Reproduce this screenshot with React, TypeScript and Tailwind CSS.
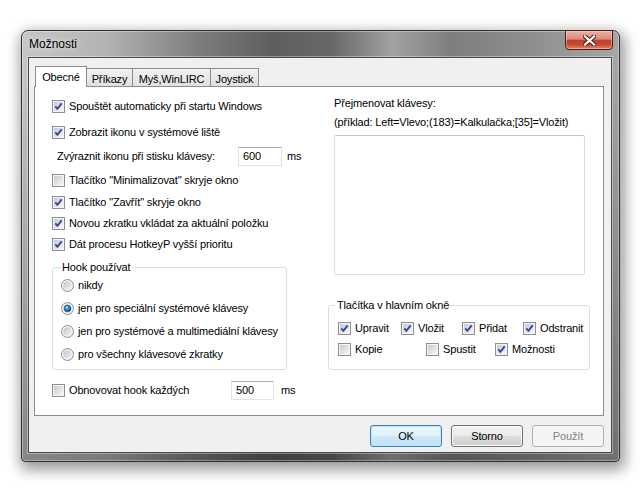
import React from "react";

function Check({ checked }: { checked?: boolean }) {
  return (
    <svg width="13" height="13" viewBox="0 0 13 13" className="block shrink-0">
      <defs>
        <linearGradient id="cbFill" x1="0" y1="0" x2="1" y2="1">
          <stop offset="0" stopColor="#c6cbd3" />
          <stop offset="1" stopColor="#f6f7f8" />
        </linearGradient>
      </defs>
      <rect x="0.5" y="0.5" width="12" height="12" fill="#f4f4f4" stroke="#8e8f8f" />
      <rect x="2" y="2" width="9" height="9" fill="url(#cbFill)" />
      {checked && (
        <path d="M3.3 6.3 L5.4 8.8 L9.7 3.3" fill="none" stroke="#34489a" strokeWidth="1.9" />
      )}
    </svg>
  );
}

function Radio({ on }: { on?: boolean }) {
  return (
    <svg width="13" height="13" viewBox="0 0 13 13" className="block shrink-0">
      <defs>
        <linearGradient id="rdFill" x1="0" y1="0" x2="1" y2="1">
          <stop offset="0" stopColor="#bfc3ca" />
          <stop offset="1" stopColor="#f6f6f6" />
        </linearGradient>
        <radialGradient id="rdOn" cx="0.4" cy="0.35" r="0.7">
          <stop offset="0" stopColor="#b0e8ff" />
          <stop offset="0.45" stopColor="#2a8ad4" />
          <stop offset="1" stopColor="#0b3f7a" />
        </radialGradient>
      </defs>
      <circle cx="6.5" cy="6.5" r="6" fill="#f2f2f2" stroke="#8e8f8f" />
      <circle cx="6.5" cy="6.5" r="4.3" fill="url(#rdFill)" />
      {on && <circle cx="6.5" cy="6.5" r="3.3" fill="url(#rdOn)" stroke="#18466f" strokeWidth="0.7" />}
    </svg>
  );
}

function CRow({ checked, children, className = "" }: { checked?: boolean; children: React.ReactNode; className?: string }) {
  return (
    <div className={"flex h-[20px] items-center " + className}>
      <Check checked={checked} />
      <span className="ml-[4px] whitespace-nowrap">{children}</span>
    </div>
  );
}

function RRow({ on, children, className = "" }: { on?: boolean; children: React.ReactNode; className?: string }) {
  return (
    <div className={"flex h-[20px] items-center " + className}>
      <Radio on={on} />
      <span className="ml-[4px] whitespace-nowrap">{children}</span>
    </div>
  );
}

function Edit({ value, w }: { value: string; w: string }) {
  return (
    <div
      className={
        "flex h-[19px] items-center border border-[#e2e3ea] border-t-[#abadb3] bg-white pl-[4px] " + w
      }
    >
      {value}
    </div>
  );
}

function CloseX() {
  return (
    <svg width="13" height="11" viewBox="0 0 13 11" className="block">
      <path d="M2 1.5 L11 9.5 M11 1.5 L2 9.5" stroke="#4a1a12" strokeWidth="4.2" strokeLinecap="square" fill="none" />
      <path d="M2 1.5 L11 9.5 M11 1.5 L2 9.5" stroke="#ffffff" strokeWidth="2.3" strokeLinecap="square" fill="none" />
    </svg>
  );
}

export default function App() {
  return (
    <div className="h-[491px] w-[642px] overflow-hidden bg-white pl-[21px] pt-[30px] font-['Liberation_Sans',Arial,sans-serif] text-[11px] leading-[14px] tracking-[-0.15px] text-black">
      <div className="flex h-[432px] w-[599px] flex-col rounded-t-[7px] rounded-b-[4px] border border-[#2e2e2e] bg-[linear-gradient(to_bottom,rgba(0,0,0,0)_0%,rgba(0,0,0,0)_8%,rgba(0,0,0,0.32)_100%),linear-gradient(to_right,#c6c6c6_0%,#b3b3b3_14%,#7c7c7c_30%,#5e5e5e_42%,#686868_52%,#a2a2a2_62%,#7e7e7e_72%,#8e8e8e_85%,#a6a6a6_100%)] shadow-[inset_0_0_0_1px_rgba(255,255,255,0.35),2px_5px_14px_3px_rgba(0,0,0,0.4)]">
        {/* title bar */}
        <div className="flex h-[26px] shrink-0 items-start justify-between">
          <div className="flex h-[26px] items-center pl-[7px] text-[12px] tracking-normal [text-shadow:0_0_6px_rgba(255,255,255,0.9)]">
            Možnosti
          </div>
          <div className="-mt-px mr-[6px] flex h-[20px] w-[48px] items-center justify-center rounded-b-[4px] border border-[#4e1a12] bg-[linear-gradient(to_bottom,#eab0a3_0%,#da8a7a_45%,#c1422c_52%,#c44a32_75%,#e08a66_100%)] shadow-[inset_0_0_0_1px_rgba(255,220,210,0.45)]">
            <CloseX />
          </div>
        </div>

        {/* client area */}
        <div className="ml-[6px] flex h-[396px] w-[584px] shrink-0 flex-col border border-[#4a4a4a] bg-[#f0f0f0] pl-[5px] pr-[7px] pt-[8px] shadow-[0_0_0_1px_rgba(255,255,255,0.35)]">
          {/* tabs */}
          <div className="relative z-10 -mb-px flex h-[21px] items-end pl-px">
            <div className="flex h-[21px] w-[52px] items-center justify-center border border-b-0 border-[#898c95] bg-white">
              Obecné
            </div>
            <div className="mb-px flex h-[18px] w-[46px] items-center justify-center border border-b-0 border-l-0 border-[#898c95] bg-[linear-gradient(to_bottom,#f2f2f2,#e0e0e0)] pt-[2px]">
              Příkazy
            </div>
            <div className="mb-px flex h-[18px] w-[78px] items-center justify-center border border-b-0 border-l-0 border-[#898c95] bg-[linear-gradient(to_bottom,#f2f2f2,#e0e0e0)] pt-[2px]">
              Myš,WinLIRC
            </div>
            <div className="mb-px flex h-[18px] w-[48px] items-center justify-center border border-b-0 border-l-0 border-[#898c95] bg-[linear-gradient(to_bottom,#f2f2f2,#e0e0e0)] pt-[2px]">
              Joystick
            </div>
          </div>

          {/* panel */}
          <div className="flex h-[330px] w-[570px] shrink-0 items-start border border-[#898c95] bg-white pl-[17px] pt-[9px]">
            {/* left column */}
            <div className="flex w-[276px] flex-col">
              <CRow checked>Spouštět automaticky při startu Windows</CRow>
              <CRow checked className="mt-[6px]">Zobrazit ikonu v systémové liště</CRow>
              <div className="mt-[4px] flex h-[20px] items-center pl-[5px]">
                <span className="w-[181px] whitespace-nowrap">Zvýraznit ikonu při stisku klávesy:</span>
                <Edit value="600" w="w-[44px]" />
                <span className="ml-[5px]">ms</span>
              </div>
              <CRow className="mt-[4px]">Tlačítko "Minimalizovat" skryje okno</CRow>
              <CRow checked className="mt-[2px]">Tlačítko "Zavřít" skryje okno</CRow>
              <CRow checked className="mt-[1px]">Novou zkratku vkládat za aktuální položku</CRow>
              <CRow checked className="mt-[1px]">Dát procesu HotkeyP vyšší prioritu</CRow>

              <fieldset className="mt-[6px] w-[234px] rounded-[3px] border border-[#d5dfe5] px-[8px] pb-[5px]">
                <legend className="px-[1px] leading-[14px]">Hook používat</legend>
                <RRow className="mt-[1px]">nikdy</RRow>
                <RRow on className="mt-[3px]">jen pro speciální systémové klávesy</RRow>
                <RRow className="mt-[3px]">jen pro systémové a multimediální klávesy</RRow>
                <RRow className="mt-[3px]">pro všechny klávesové zkratky</RRow>
              </fieldset>

              <div className="mt-[10px] flex h-[20px] items-center">
                <Check />
                <span className="ml-[4px] w-[162px] whitespace-nowrap">Obnovovat hook každých</span>
                <Edit value="500" w="w-[43px]" />
                <span className="ml-[7px]">ms</span>
              </div>
            </div>

            {/* right column */}
            <div className="flex w-[260px] flex-col">
              <div className="ml-[6px] h-[14px] whitespace-nowrap">Přejmenovat klávesy:</div>
              <div className="ml-[6px] mt-[5px] h-[14px] whitespace-nowrap">
                (příklad: Left=Vlevo;(183)=Kalkulačka;[35]=Vložit)
              </div>
              <div className="ml-[6px] mt-[6px] h-[140px] w-[251px] rounded-[2px] border border-[#d9dce2] border-t-[#c3c6cc] bg-white" />

              <fieldset className="mt-[23px] w-[260px] rounded-[3px] border border-[#d5dfe5] px-[6px] pb-[10px]">
                <legend className="px-[2px] leading-[14px]">Tlačítka v hlavním okně</legend>
                <div className="ml-[3px] mt-[6px] flex h-[20px] items-center">
                  <CRow checked className="w-[63px]">Upravit</CRow>
                  <CRow checked className="w-[61px]">Vložit</CRow>
                  <CRow checked className="w-[61px]">Přidat</CRow>
                  <CRow checked>Odstranit</CRow>
                </div>
                <div className="ml-[3px] mt-[1px] flex h-[20px] items-center">
                  <CRow className="w-[88px]">Kopie</CRow>
                  <CRow className="w-[69px]">Spustit</CRow>
                  <CRow checked>Možnosti</CRow>
                </div>
              </fieldset>
            </div>
          </div>

          {/* buttons */}
          <div className="mt-[9px] flex justify-end gap-[9px]">
            <div className="flex h-[22px] w-[72px] items-center justify-center rounded-[3px] border border-[#3c7fb1] bg-[linear-gradient(to_bottom,#eef7fc_0%,#e0f0fa_50%,#cde8f7_51%,#bfe1f5_100%)] shadow-[inset_0_0_0_1px_#bfe6fb]">
              OK
            </div>
            <div className="flex h-[22px] w-[72px] items-center justify-center rounded-[3px] border border-[#707070] bg-[linear-gradient(to_bottom,#f2f2f2_0%,#ebebeb_50%,#dddddd_51%,#cfcfcf_100%)] shadow-[inset_0_0_0_1px_#fcfcfc]">
              Storno
            </div>
            <div className="flex h-[22px] w-[72px] items-center justify-center rounded-[3px] border border-[#adb2b5] bg-[#f4f4f4] text-[#838383]">
              Použít
            </div>
          </div>
        </div>
      </div>
    </div>
  );
}
